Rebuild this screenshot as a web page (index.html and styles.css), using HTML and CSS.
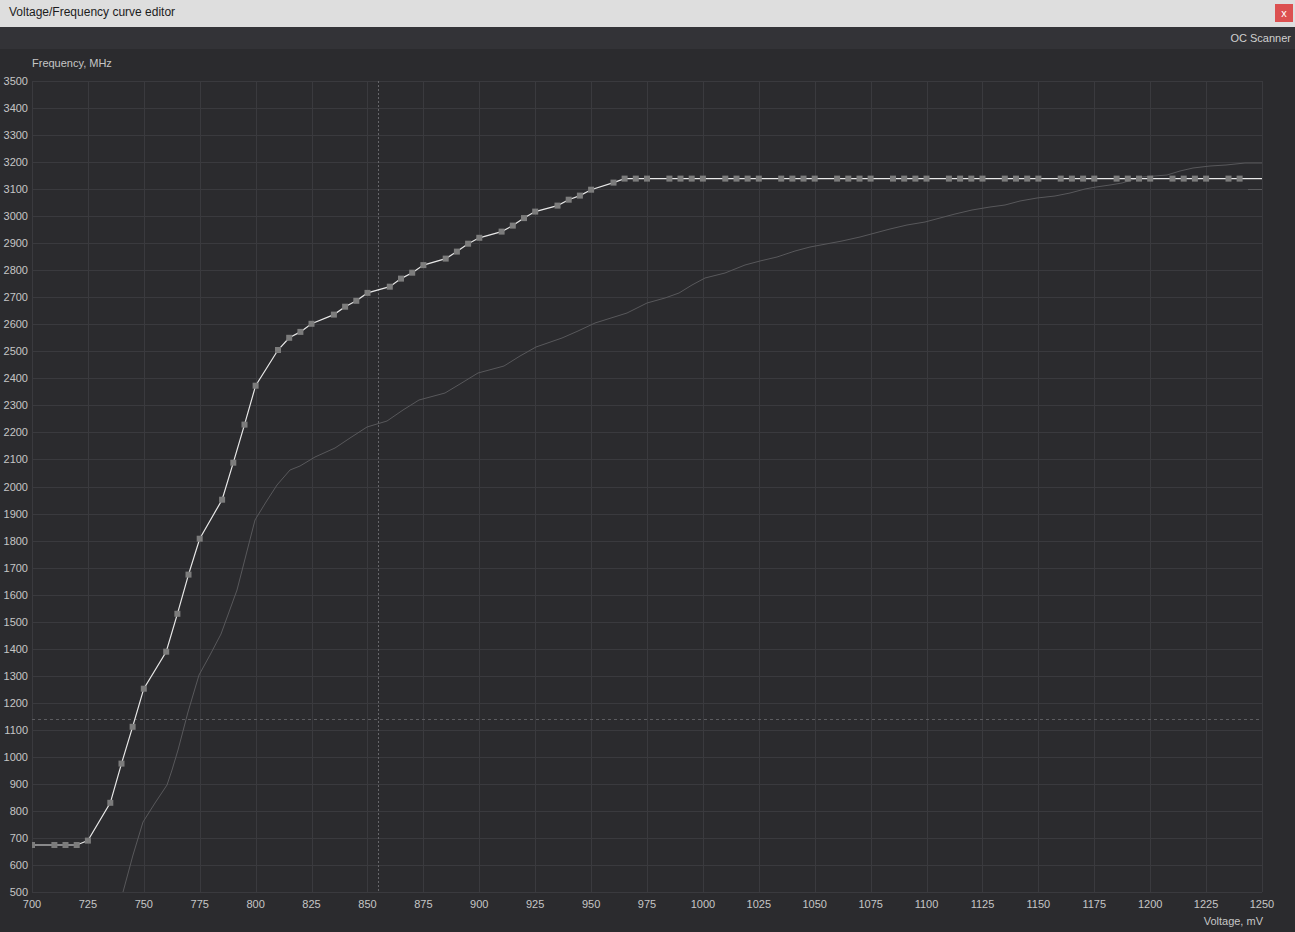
FILE: index.html
```html
<!DOCTYPE html>
<html lang="en">
<head>
  <meta charset="UTF-8">
  <title>Voltage/Frequency curve editor</title>
  <link rel="stylesheet" href="styles.css">
</head>
<body>
  <div class="titlebar">
    <span class="title">Voltage/Frequency curve editor</span>
    <button class="close">x</button>
  </div>
  <div class="toolbar">
    <span class="scanner">OC Scanner</span>
  </div>
  <div class="chart">
    <svg id="plot" width="1295" height="883" viewBox="0 49 1295 883">
      <defs>
        <clipPath id="area"><rect x="32" y="81" width="1230" height="811"></rect></clipPath>
      </defs>
      <g id="grid"></g>
      <g id="labels"></g>
      <text class="axis-title" x="32" y="67">Frequency, MHz</text>
      <text class="axis-title" x="1263" y="925" text-anchor="end">Voltage, mV</text>
      <g clip-path="url(#area)">
        <line class="cursor" x1="378.5" y1="81" x2="378.5" y2="892"></line>
        <line class="cursor-h" x1="32" y1="719.5" x2="1262" y2="719.5"></line>
        <polyline id="scan" class="scan"></polyline>
        <line class="scan" x1="1248" y1="189.5" x2="1262" y2="189.5"></line>
        <polyline id="curve" class="curve"></polyline>
        <g id="dots"></g>
      </g>
    </svg>
  </div>
  <script>
    // оси графика в пикселях
    const NS = 'http://www.w3.org/2000/svg';
    const plotL = 32, plotR = 1262, plotT = 81, plotB = 892;

    function xOf(v) { return plotL + (v - 700) * (plotR - plotL) / 550; }
    function yOf(f) { return plotT + (3500 - f) * (plotB - plotT) / 3000; }

    function add(parent, tag, attrs, text) {
      const node = document.createElementNS(NS, tag);
      for (const k in attrs) node.setAttribute(k, attrs[k]);
      if (text !== undefined) node.textContent = text;
      document.getElementById(parent).appendChild(node);
      return node;
    }

    // сетка и подписи
    for (let v = 700; v <= 1250; v += 25) {
      const x = Math.round(xOf(v)) + 0.5;
      add('grid', 'line', { x1: x, y1: plotT, x2: x, y2: plotB });
      add('labels', 'text', { x: xOf(v), y: 908, 'text-anchor': 'middle' }, v);
    }
    for (let f = 500; f <= 3500; f += 100) {
      const y = Math.round(yOf(f)) + 0.5;
      add('grid', 'line', { x1: plotL, y1: y, x2: plotR, y2: y });
      add('labels', 'text', { x: 28, y: yOf(f) + 4, 'text-anchor': 'end' }, f);
    }

    // кривая V/F: [mV, MHz]
    const curve = [
      [700, 674], [710, 674], [715, 674], [720, 674], [725, 690],
      [735, 830], [740, 975], [745, 1111], [750, 1252],
      [760, 1389], [765, 1529], [770, 1674], [775, 1807],
      [785, 1951], [790, 2088], [795, 2229], [800, 2373],
      [810, 2505], [815, 2550], [820, 2572], [825, 2602],
      [835, 2636], [840, 2665], [845, 2687], [850, 2716],
      [860, 2739], [865, 2769], [870, 2791], [875, 2819],
      [885, 2843], [890, 2869], [895, 2898], [900, 2920],
      [910, 2943], [915, 2965], [920, 2993], [925, 3017],
      [935, 3039], [940, 3061], [945, 3076], [950, 3098],
      [960, 3124]
    ];
    for (let v = 965; v <= 1240; v += 5) {
      if (v % 25 !== 5) curve.push([v, 3139]);
    }

    const pts = curve.map(p => xOf(p[0]).toFixed(1) + ',' + yOf(p[1]).toFixed(1));
    pts.push(plotR + ',' + yOf(3139).toFixed(1));
    document.getElementById('curve').setAttribute('points', pts.join(' '));

    curve.forEach(p => {
      add('dots', 'rect', { x: (xOf(p[0]) - 3).toFixed(1), y: (yOf(p[1]) - 3).toFixed(1), width: 6, height: 6 });
    });

    // результат сканера, снят по пикселям
    const scan = [
      [123, 892], [133, 855], [143, 822], [155, 803], [167, 785], [172, 770], [178, 750],
      [188, 712], [199, 675], [210, 655], [221, 634], [229, 612], [237, 590],
      [246, 555], [255, 520], [266, 502], [277, 485], [290, 470], [300, 466],
      [315, 457], [335, 448], [350, 438], [367, 427], [387, 421], [403, 410],
      [419, 400], [445, 393], [460, 384], [478, 373], [504, 366], [520, 356],
      [536, 347], [562, 338], [578, 331], [595, 323], [627, 313], [647, 303],
      [665, 298], [679, 293], [692, 285], [705, 278], [725, 273], [745, 265],
      [760, 261], [777, 257], [795, 251], [810, 247], [842, 241], [860, 237],
      [875, 233], [890, 229], [907, 225], [925, 222], [940, 218], [955, 214],
      [972, 210], [990, 207], [1005, 205], [1020, 201], [1037, 198], [1055, 196],
      [1070, 193], [1085, 189], [1096, 187], [1110, 185], [1122, 183], [1135, 179],
      [1142, 177], [1167, 175], [1180, 171], [1193, 168], [1210, 166], [1226, 165],
      [1245, 163], [1262, 163]
    ];
    document.getElementById('scan').setAttribute('points', scan.map(p => p.join(',')).join(' '));
  </script>
</body>
</html>
```

FILE: styles.css
```css
body {
  margin: 0;
  padding: 0;
  background-color: #2b2b2e;
  font-family: "Liberation Sans", Arial, sans-serif;
  overflow: hidden;
}
.titlebar {
  height: 27px;
  background-color: #dedede;
  display: flex;
  align-items: center;
  justify-content: space-between;
  padding-left: 9px;
  padding-right: 2px;
}
.title {
  font-size: 12px;
  color: #1c1c1c;
  margin-top: -3px;
}
.close {
  width: 18px;
  height: 18px;
  border: none;
  padding: 0;
  margin-top: -1px;
  background-color: #dc5050;
  color: #ffffff;
  font-family: "Liberation Sans", Arial, sans-serif;
  font-size: 11px;
  line-height: 16px;
}
.toolbar {
  height: 22px;
  background-color: #333337;
  display: flex;
  align-items: center;
  justify-content: flex-end;
  padding-right: 4px;
}
.scanner {
  font-size: 11px;
  color: #d0d0d0;
}
.chart {
  height: 883px;
}
#plot {
  display: block;
}
#grid line {
  stroke: #3a3a3e;
  stroke-width: 1;
  shape-rendering: crispEdges;
}
#labels text {
  fill: #c6c6c6;
  font-size: 11px;
  font-family: "Liberation Sans", Arial, sans-serif;
}
.axis-title {
  fill: #c6c6c6;
  font-size: 11px;
  font-family: "Liberation Sans", Arial, sans-serif;
}
.cursor {
  stroke: #66666a;
  stroke-width: 1;
  stroke-dasharray: 2 2;
  shape-rendering: crispEdges;
}
.cursor-h {
  stroke: #5c5c60;
  stroke-width: 1;
  stroke-dasharray: 3 3;
  shape-rendering: crispEdges;
}
.scan {
  fill: none;
  stroke: #58585b;
  stroke-width: 1;
}
.curve {
  fill: none;
  stroke: #e8e8e8;
  stroke-width: 1.2;
}
#dots rect {
  fill: #7c7c7c;
}
```
